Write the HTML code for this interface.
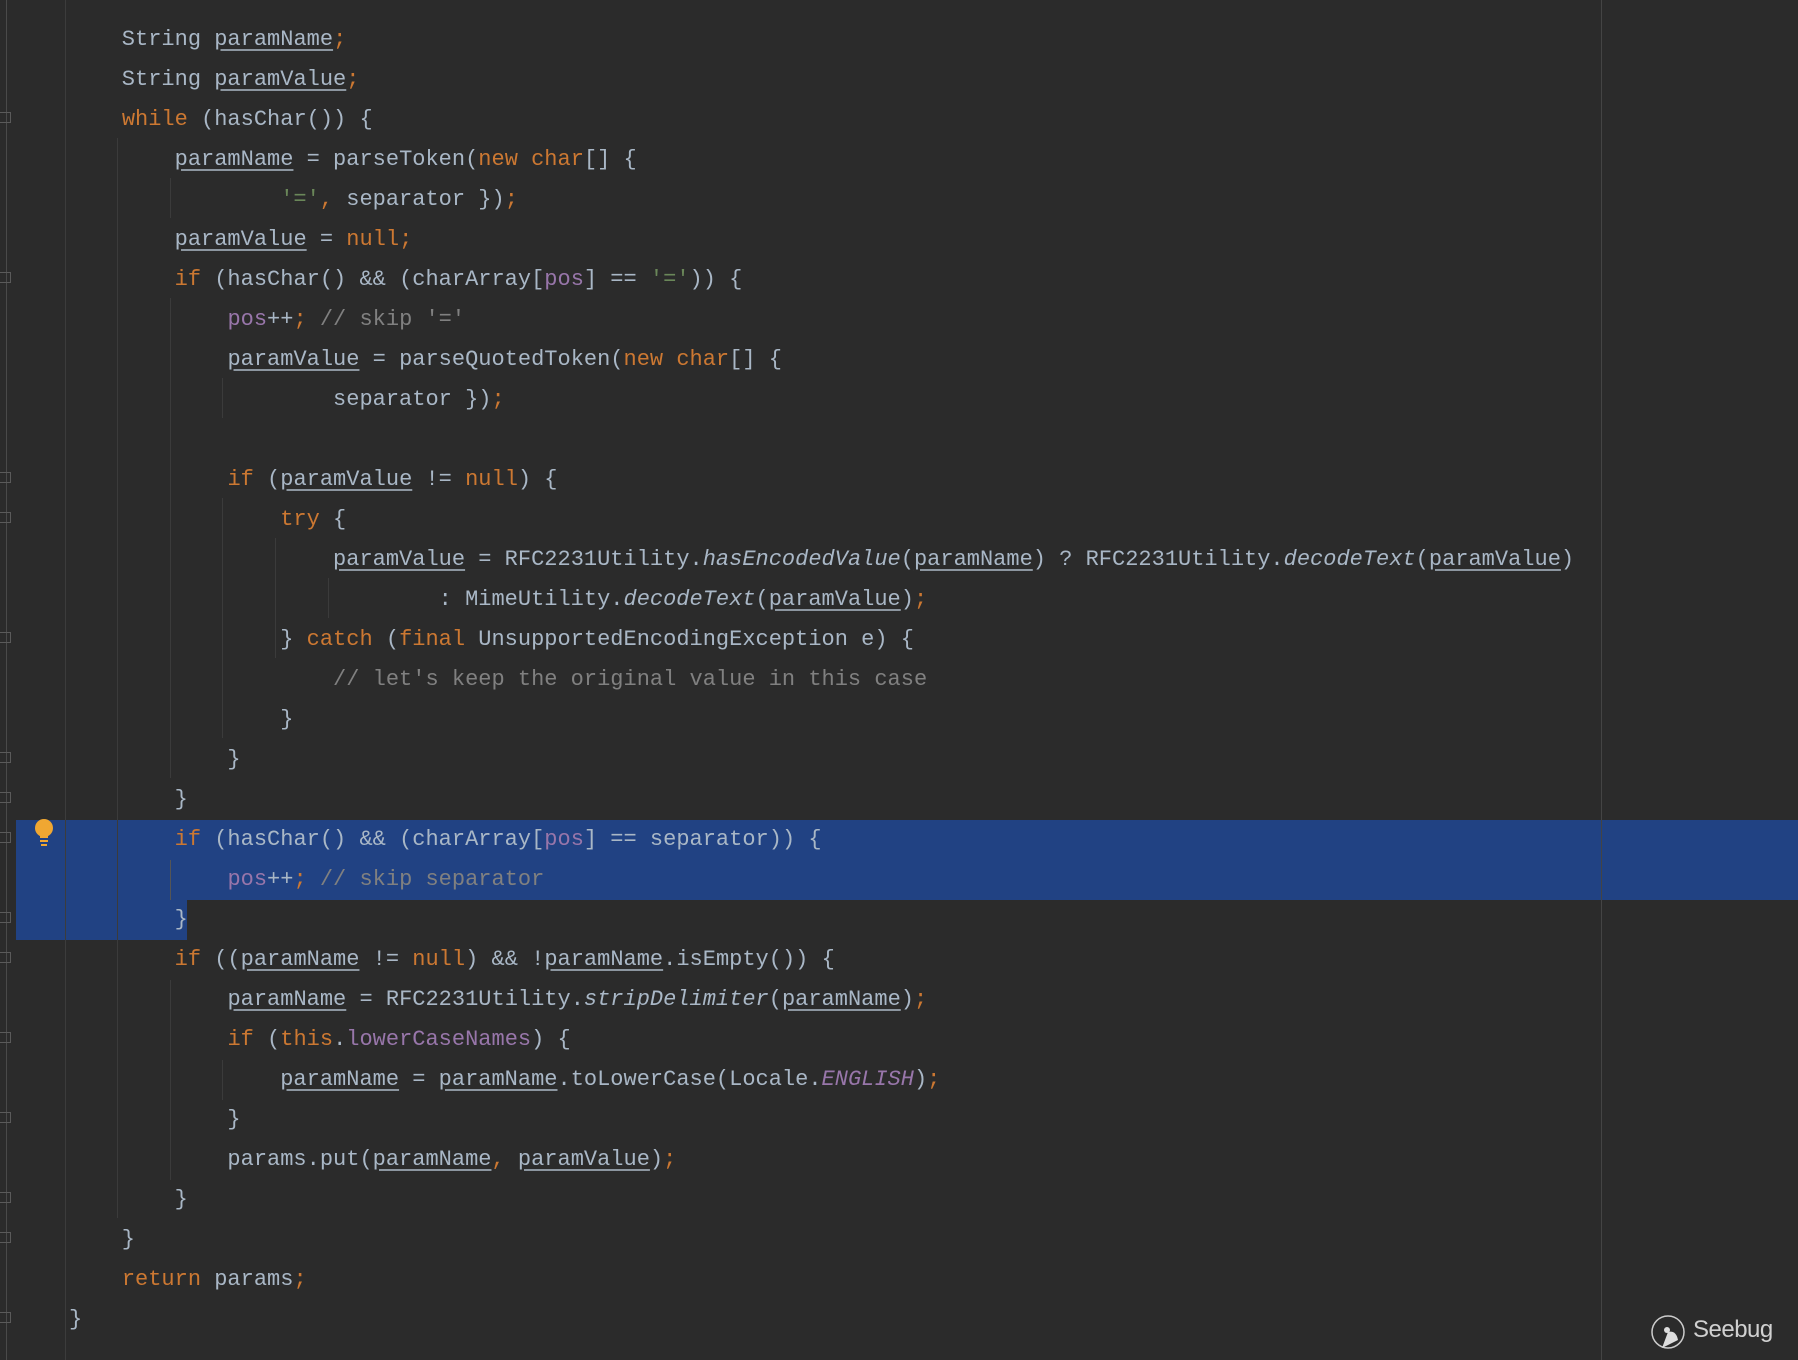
<!DOCTYPE html>
<html><head><meta charset="utf-8"><style>
html,body{margin:0;padding:0;}
body{width:1798px;height:1360px;background:#2b2b2b;position:relative;overflow:hidden;font-family:"Liberation Mono",monospace;}
.hl{position:absolute;background:#214283;}
.vl{position:absolute;top:0;width:1px;height:1360px;}
.g{position:absolute;width:1px;background:#3b3b3b;}
pre{position:absolute;left:69px;top:20px;margin:0;font-family:"Liberation Mono",monospace;font-size:22px;line-height:40px;color:#a9b7c6;white-space:pre;}
.k{color:#cc7832}.p{color:#9876aa}.s{color:#6a8759}.c{color:#808080}.i{font-style:italic}
.u{text-decoration:underline;text-underline-offset:4px;text-decoration-color:#8c96a0}
.fold{position:absolute;left:0;width:11px;height:11px;border:1px solid #5a5a5a;border-left:none;box-sizing:border-box;}
</style></head><body>
<div class="hl" style="left:16px;top:820px;width:1782px;height:80px"></div>
<div class="hl" style="left:16px;top:900px;width:171px;height:40px"></div>
<div class="vl" style="left:6px;background:#4a4a4a"></div>
<div class="vl" style="left:65px;background:#3c3c3c"></div>
<div class="vl" style="left:1601px;background:#444"></div>
<div class="g" style="left:117px;top:138px;height:1080px"></div>
<div class="g" style="left:170px;top:178px;height:40px"></div>
<div class="g" style="left:170px;top:298px;height:480px"></div>
<div class="g" style="left:170px;top:860px;height:40px;background:#555"></div>
<div class="g" style="left:170px;top:980px;height:200px"></div>
<div class="g" style="left:222px;top:378px;height:40px"></div>
<div class="g" style="left:222px;top:498px;height:240px"></div>
<div class="g" style="left:222px;top:1060px;height:40px"></div>
<div class="g" style="left:275px;top:538px;height:120px"></div>
<div class="g" style="left:328px;top:578px;height:40px"></div>
<div class="fold" style="top:112px"></div><div class="fold" style="top:272px"></div><div class="fold" style="top:472px"></div><div class="fold" style="top:512px"></div><div class="fold" style="top:632px"></div><div class="fold" style="top:752px"></div><div class="fold" style="top:792px"></div><div class="fold" style="top:832px"></div><div class="fold" style="top:912px"></div><div class="fold" style="top:952px"></div><div class="fold" style="top:1032px"></div><div class="fold" style="top:1112px"></div><div class="fold" style="top:1192px"></div><div class="fold" style="top:1232px"></div><div class="fold" style="top:1312px"></div>
<svg style="position:absolute;left:32px;top:818px" width="24" height="30"><circle cx="12" cy="10" r="9" fill="#f0a732"/><rect x="8" y="17" width="8" height="3" fill="#f0a732"/><rect x="8" y="22" width="8" height="2" fill="#f0a732"/><rect x="9" y="26" width="6" height="2" fill="#f0a732"/></svg>
<pre>    String <span class="u">paramName</span><span class="k">;</span>
    String <span class="u">paramValue</span><span class="k">;</span>
    <span class="k">while</span> (hasChar()) {
        <span class="u">paramName</span> = parseToken(<span class="k">new char</span>[] {
                <span class="s">'='</span><span class="k">,</span> separator })<span class="k">;</span>
        <span class="u">paramValue</span> = <span class="k">null;</span>
        <span class="k">if</span> (hasChar() &amp;&amp; (charArray[<span class="p">pos</span>] == <span class="s">'='</span>)) {
            <span class="p">pos</span>++<span class="k">;</span> <span class="c">// skip '='</span>
            <span class="u">paramValue</span> = parseQuotedToken(<span class="k">new char</span>[] {
                    separator })<span class="k">;</span>

            <span class="k">if</span> (<span class="u">paramValue</span> != <span class="k">null</span>) {
                <span class="k">try</span> {
                    <span class="u">paramValue</span> = RFC2231Utility.<span class="i">hasEncodedValue</span>(<span class="u">paramName</span>) ? RFC2231Utility.<span class="i">decodeText</span>(<span class="u">paramValue</span>)
                            : MimeUtility.<span class="i">decodeText</span>(<span class="u">paramValue</span>)<span class="k">;</span>
                } <span class="k">catch</span> (<span class="k">final</span> UnsupportedEncodingException e) {
                    <span class="c">// let's keep the original value in this case</span>
                }
            }
        }
        <span class="k">if</span> (hasChar() &amp;&amp; (charArray[<span class="p">pos</span>] == separator)) {
            <span class="p">pos</span>++<span class="k">;</span> <span class="c">// skip separator</span>
        }
        <span class="k">if</span> ((<span class="u">paramName</span> != <span class="k">null</span>) &amp;&amp; !<span class="u">paramName</span>.isEmpty()) {
            <span class="u">paramName</span> = RFC2231Utility.<span class="i">stripDelimiter</span>(<span class="u">paramName</span>)<span class="k">;</span>
            <span class="k">if</span> (<span class="k">this</span>.<span class="p">lowerCaseNames</span>) {
                <span class="u">paramName</span> = <span class="u">paramName</span>.toLowerCase(Locale.<span class="p i">ENGLISH</span>)<span class="k">;</span>
            }
            params.put(<span class="u">paramName</span><span class="k">,</span> <span class="u">paramValue</span>)<span class="k">;</span>
        }
    }
    <span class="k">return</span> params<span class="k">;</span>
}</pre>
<svg style="position:absolute;left:1650px;top:1312px" width="40" height="40"><circle cx="18" cy="20" r="16" fill="none" stroke="#ccc" stroke-width="1.5"/><path d="M12 36 L18 20 Q26 18 28 28 Z" fill="#ddd"/><circle cx="17" cy="18" r="3" fill="#ddd"/></svg>
<div style="position:absolute;left:1693px;top:1316px;font-family:'Liberation Sans',sans-serif;font-size:24px;color:#d0d0d0;letter-spacing:-0.5px">Seebug</div>
</body></html>
